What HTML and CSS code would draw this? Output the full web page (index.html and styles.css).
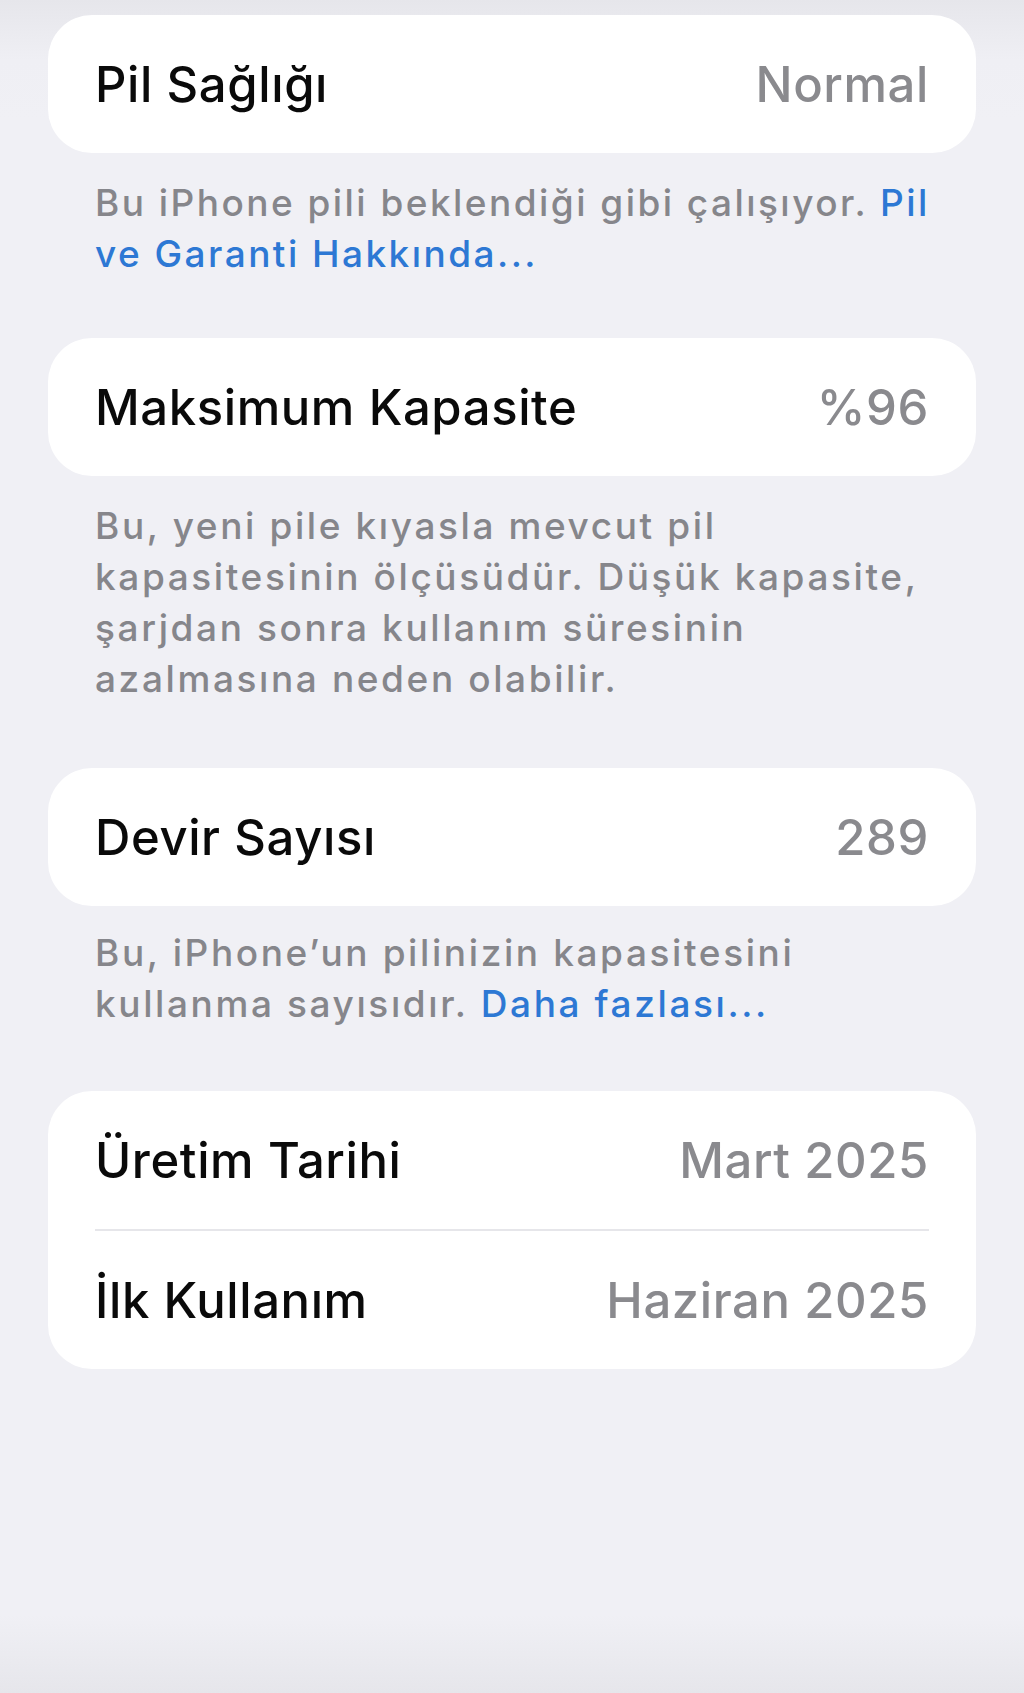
FILE: index.html
```html
<!DOCTYPE html>
<html lang="tr">
<head>
  <meta charset="utf-8">
  <title>Pil Sağlığı</title>
  <link rel="stylesheet" href="styles.css">
</head>
<body>
  <div class="screen">
    <div class="group">
      <div class="row">
        <span class="label">Pil Sağlığı</span>
        <span class="value">Normal</span>
      </div>
    </div>
    <p class="note first">Bu iPhone pili beklendiği gibi çalışıyor. <a href="#">Pil<br>ve Garanti Hakkında...</a></p>

    <div class="group">
      <div class="row">
        <span class="label">Maksimum Kapasite</span>
        <span class="value">%96</span>
      </div>
    </div>
    <p class="note long">Bu, yeni pile kıyasla mevcut pil<br>kapasitesinin ölçüsüdür. Düşük kapasite,<br>şarjdan sonra kullanım süresinin<br>azalmasına neden olabilir.</p>

    <div class="group">
      <div class="row">
        <span class="label">Devir Sayısı</span>
        <span class="value">289</span>
      </div>
    </div>
    <p class="note last">Bu, iPhone’un pilinizin kapasitesini<br>kullanma sayısıdır. <a href="#">Daha fazlası...</a></p>

    <div class="group">
      <div class="row">
        <span class="label">Üretim Tarihi</span>
        <span class="value">Mart 2025</span>
      </div>
      <div class="row">
        <span class="label">İlk Kullanım</span>
        <span class="value">Haziran 2025</span>
      </div>
    </div>
  </div>
</body>
</html>
```

FILE: styles.css
```css
html, body {
  margin: 0;
  height: 100%;
}

body {
  font-family: Inter, "Noto Sans", sans-serif;
  background: linear-gradient(to bottom, #e6e6eb 0, #efeff4 60px, #f0f0f5 120px, #f0f0f5 1615px, #e6e6eb 100%);
  color: #0a0a0a;
}

.screen {
  padding: 15px 48px 0 48px;
}

.group {
  background-color: #fff;
  border-radius: 44px;
  padding: 0 47px;
}

.row {
  display: flex;
  justify-content: space-between;
  align-items: center;
  height: 138px;
  font-size: 49px;
  font-weight: 500;
  letter-spacing: 0.6px;
}

.row + .row {
  border-top: 2px solid #e6e6ea;
}

.value {
  color: #8a8a8e;
}

.note {
  margin: 24px 0 59px 0;
  padding: 0 47px;
  font-size: 37px;
  font-weight: 500;
  line-height: 51px;
  letter-spacing: 2.6px;
  color: #86868b;
  white-space: nowrap;
}

.note.first {
  letter-spacing: 2.45px;
}

.note.long {
  margin-bottom: 64px;
}

.note.last {
  margin: 21px 0 62px 0;
}

.note a {
  color: #2d78d4;
  text-decoration: none;
}
```
